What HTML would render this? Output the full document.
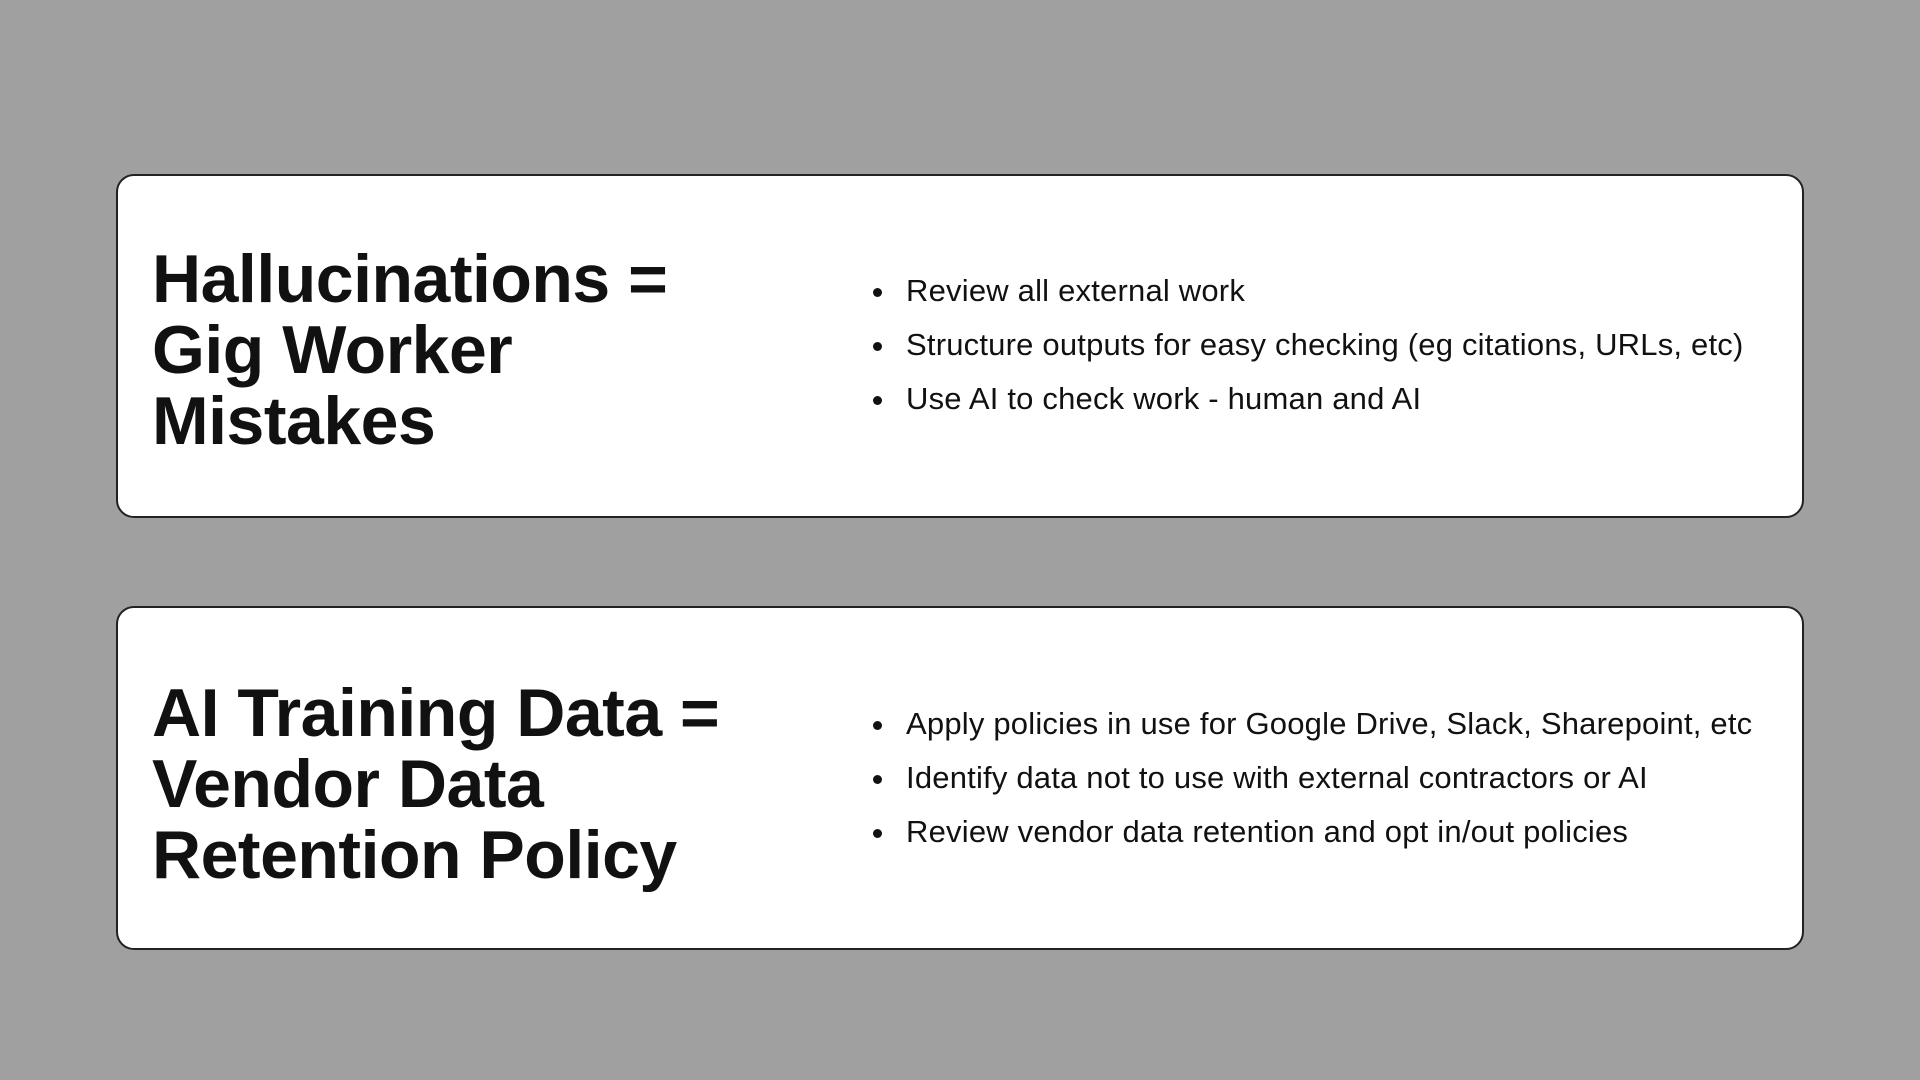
<!DOCTYPE html>
<html><head><meta charset="utf-8"><style>
html,body{margin:0;padding:0}
body{width:1920px;height:1080px;background:#a0a0a0;position:relative;overflow:hidden;font-family:"Liberation Sans",sans-serif;color:#111}
.card{position:absolute;left:116px;width:1688px;background:#fff;border:2.5px solid #222;border-radius:18px;box-sizing:border-box}
.t{position:absolute;left:34px;font-weight:bold;font-size:68px;line-height:71px;letter-spacing:-0.5px;color:#111}
ul{position:absolute;left:760px;margin:0;padding:0 0 0 20px;font-size:31px;line-height:54px;letter-spacing:0.2px;color:#111}
li{padding-left:8px}
</style></head><body>
<div class="card" style="top:174px;height:344px">
<div class="t" style="top:68px">Hallucinations =<br>Gig Worker<br>Mistakes</div>
<ul style="top:88px"><li>Review all external work</li><li>Structure outputs for easy checking (eg citations, URLs, etc)</li><li>Use AI to check work - human and AI</li></ul>
</div>
<div class="card" style="top:606px;height:344px">
<div class="t" style="top:70px">AI Training Data =<br>Vendor Data<br>Retention Policy</div>
<ul style="top:89px"><li>Apply policies in use for Google Drive, Slack, Sharepoint, etc</li><li>Identify data not to use with external contractors or AI</li><li>Review vendor data retention and opt in/out policies</li></ul>
</div>
</body></html>
